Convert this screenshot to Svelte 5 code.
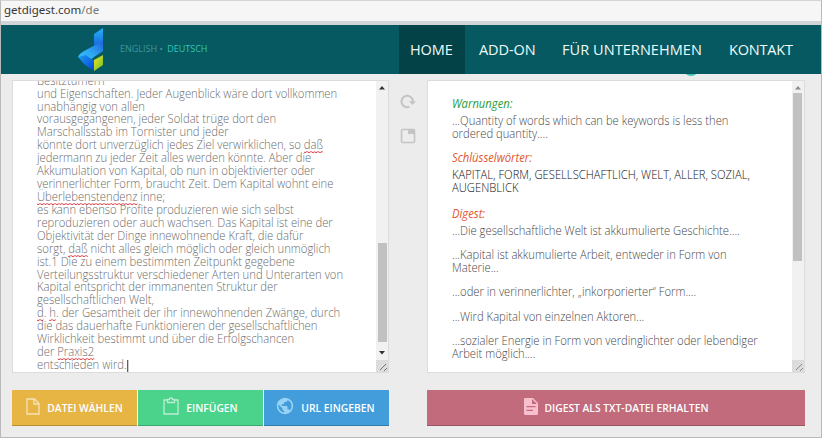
<script>
  const nav = ['HOME', 'ADD-ON', 'FÜR UNTERNEHMEN', 'KONTAKT'];
  // Words wrapped in underscores are flagged by the spell checker.
  const lines = [
    'Besitztümern',
    'und Eigenschaften. Jeder Augenblick wäre dort vollkommen',
    'unabhängig von allen',
    'vorausgegangenen, jeder Soldat trüge dort den',
    'Marschallsstab im Tornister und jeder',
    'könnte dort unverzüglich jedes Ziel verwirklichen, so _daß_',
    'jedermann zu jeder Zeit alles werden könnte. Aber die',
    'Akkumulation von Kapital, ob nun in objektivierter oder',
    'verinnerlichter Form, braucht Zeit. Dem Kapital wohnt eine',
    '_Überlebenstendenz_ inne;',
    'es kann ebenso Profite produzieren wie sich selbst',
    'reproduzieren oder auch wachsen. Das Kapital ist eine der',
    'Objektivität der Dinge innewohnende Kraft, die dafür',
    'sorgt, _daß_ nicht alles gleich möglich oder gleich unmöglich',
    'ist.1 Die zu einem bestimmten Zeitpunkt gegebene',
    'Verteilungsstruktur verschiedener Arten und Unterarten von',
    'Kapital entspricht der immanenten Struktur der',
    'gesellschaftlichen Welt,',
    '_d_. _h_. der Gesamtheit der ihr innewohnenden Zwänge, durch',
    'die das dauerhafte Funktionieren der gesellschaftlichen',
    'Wirklichkeit bestimmt und über die Erfolgschancen',
    'der _Praxis2_',
    'entschieden wird.'
  ].map((l) => l.split('_'));
  const digest = [
    ['...Die gesellschaftliche Welt ist akkumulierte Geschichte....'],
    ['...Kapital ist akkumulierte Arbeit, entweder in Form von', 'Materie...'],
    ['...oder in verinnerlichter, „inkorporierter“ Form....'],
    ['...Wird Kapital von einzelnen Aktoren...'],
    ['...sozialer Energie in Form von verdinglichter oder lebendiger', 'Arbeit möglich....']
  ];
</script>

<div class="window">
  <div class="address">getdigest.com<span>/de</span></div>
  <header>
    <svg class="logo" width="28" height="46" viewBox="0 0 28 46">
      <defs>
        <linearGradient id="wing" x1="1" y1="0" x2="0" y2="1">
          <stop offset="0" stop-color="#1d62dc" /><stop offset=".5" stop-color="#2fa6f2" /><stop offset="1" stop-color="#35c8fa" />
        </linearGradient>
        <linearGradient id="base" x1="0" y1="0" x2="1" y2="1">
          <stop offset="0" stop-color="#1a9df0" /><stop offset="1" stop-color="#0645d8" />
        </linearGradient>
        <linearGradient id="tip" x1="0" y1="0" x2="0" y2="1">
          <stop offset="0" stop-color="#27b3f7" /><stop offset="1" stop-color="#1763dd" />
        </linearGradient>
        <linearGradient id="leaf" x1="0" y1="0" x2="1" y2="1">
          <stop offset="0" stop-color="#efe51d" /><stop offset="1" stop-color="#72bd30" />
        </linearGradient>
      </defs>
      <path d="M17 8 26 2V17L17 21Z" fill="url(#tip)" />
      <path d="M1 31Q2 28 7 25L26 15V25L17 31 10 37Z" fill="url(#wing)" />
      <path d="M1 31 9 29Q13 33 17 34V45Q12 42 7 38Z" fill="url(#base)" />
      <path d="M17 34 26 29V39L17 45Z" fill="url(#leaf)" />
    </svg>
    <div class="languages">ENGLISH <i>•</i> <b>DEUTSCH</b></div>
    <nav>
      {#each nav as item, i}<div class={['item', `item-${i}`, i === 0 && 'active']}><span>{item}</span></div>{/each}
    </nav>
    <div class="arc"></div>
  </header>

  <main>
    <section class="source">
      <div class="panel">
        <div class="text">
          {#each lines as parts, n}
            <div>{#each parts as part, i}{#if i % 2}<u>{part}</u>{:else}{part}{/if}{/each}{#if n === lines.length - 1}<span class="caret"></span>{/if}</div>
          {/each}
        </div>
        <div class="scroll">
          <svg width="12" height="13" viewBox="0 0 12 13"><path d="M3 8.500 6 5 9 8.500Z" fill="#333" /></svg>
          <div class="thumb"></div>
          <svg width="12" height="18" viewBox="0 0 12 18"><path d="M3 9h6L6 12.500Z" fill="#333" /></svg>
          <svg class="grip" width="12" height="12" viewBox="0 0 12 12"><path d="M4 10 10 4M8 11 11 8" stroke="#777" fill="none" /></svg>
        </div>
      </div>
      <div class="buttons">
        <button class="file">
          <svg width="14" height="17" viewBox="0 0 14 17"><path d="M1 1H8.5L13 5.5V16H1ZM8 1V6H13" /></svg><span>DATEI WÄHLEN</span>
        </button>
        <button class="paste">
          <svg width="16" height="18" viewBox="0 0 16 18"><path d="M5 3H1V17H15V3H11M4.5 2.5H6.2Q6.5 1 8 1T9.800 2.500H11.500V5.500H4.500Z" /></svg><span>EINFÜGEN</span>
        </button>
        <button class="url">
          <svg width="18" height="18" viewBox="1 1 22 22"><path class="solid" d="M12 2C6.480 2 2 6.480 2 12s4.480 10 10 10 10-4.480 10-10S17.520 2 12 2zm-1 17.930c-3.950-.490-7-3.850-7-7.930 0-.620.080-1.210.210-1.790L9 15v1c0 1.100.900 2 2 2v1.930zm6.900-2.540c-.260-.810-1-1.390-1.900-1.390h-1v-3c0-.550-.450-1-1-1H8v-2h2c.550 0 1-.450 1-1V7h2c1.100 0 2-.900 2-2v-.410c2.930 1.190 5 4.060 5 7.410 0 2.080-.800 3.970-2.100 5.390z" /></svg><span>URL EINGEBEN</span>
        </button>
      </div>
    </section>

    <aside>
      <svg width="16" height="16" viewBox="0 0 16 16"><path d="M9.500 12.700A5.700 5.700 0 1 1 12.900 7.500" fill="none" stroke="#c4c4c4" stroke-width="2" /><path d="M9 7.200H15.900L12.500 11Z" fill="#c4c4c4" /></svg>
      <svg width="16" height="16" viewBox="0 0 16 16"><rect x="1.500" y="1.500" width="13" height="13" rx="1" fill="none" stroke="#c4c4c4" stroke-width="1.600" /><path d="M8 1H15V6H8Z" fill="#c4c4c4" /></svg>
    </aside>

    <section class="result">
      <div class="panel">
        <div class="report">
          <h3 class="warn">Warnungen:</h3>
          <p>...Quantity of words which can be keywords is less then<br />ordered quantity....</p>
          <h3>Schlüsselwörter:</h3>
          <p class="keys">KAPITAL, FORM, GESELLSCHAFTLICH, WELT, ALLER, SOZIAL,<br />AUGENBLICK</p>
          <h3>Digest:</h3>
          {#each digest as item}<p class="quote">{#each item as line}<span>{line}</span>{/each}</p>{/each}
        </div>
        <div class="scroll">
          <svg width="12" height="12" viewBox="0 0 12 12"><path d="M3 8.500 6 5 9 8.500Z" fill="#8b8b8b" /></svg>
          <div class="thumb"></div>
          <svg class="grip" width="12" height="12" viewBox="0 0 12 12"><path d="M4 10 10 4M8 11 11 8" stroke="#888" fill="none" /></svg>
        </div>
      </div>
      <div class="buttons">
        <button class="download">
          <svg width="14" height="17" viewBox="0 0 14 17"><path class="solid" fill-rule="evenodd" d="M1 0H9L14 5V15.500Q14 17 12.500 17H1.500Q0 17 0 15.500V1Q0 0 1 0ZM8 1V6H13ZM2.500 8V9.300H11.500V8ZM2.500 11.800V13.100H9V11.800Z" /></svg><span>DIGEST ALS TXT-DATEI ERHALTEN</span>
        </button>
      </div>
    </section>
  </main>
</div>

<style>
  .window {
    box-sizing: border-box; width: 822px; height: 438px; overflow: hidden;
    display: flex; flex-direction: column; background: #ececec;
    border: 1px solid #b9b9b9; border-top-color: #d4d4d4;
    font-family: 'Open Sans', 'Noto Sans', sans-serif;
  }
  .address {
    box-sizing: border-box; height: 24px; flex: none; padding-left: 3px;
    background: #f6f6f6; border-bottom: 4px solid #d2d5d8;
    font: 11.500px/17px 'Noto Sans', sans-serif; color: #353535;
  }
  .address span { color: #777; }
  header { position: relative; display: flex; height: 49px; flex: none; background: #065960; }
  .logo { margin: 1px 0 0 76px; flex: none; }
  .languages { margin-left: 15px; width: 279px; flex: none; font-size: 9px; line-height: 48px; color: #3f969a; white-space: pre; }
  .languages i { font-style: normal; font-size: 9px; }
  .languages b { font-weight: 400; color: #30c7b5; margin-left: 2px; }
  nav { display: flex; font-size: 14.500px; line-height: 49px; color: #eefafa; }
  .item { box-sizing: border-box; padding-left: 11px; white-space: nowrap; }
  .item-0 { width: 66px; letter-spacing: -.1px; }
  .item-1 { width: 83px; padding-left: 14px; letter-spacing: -.1px; }
  .item-2 { width: 167px; padding-left: 14px; letter-spacing: .07px; }
  .item-3 { width: 92px; padding-left: 14px; letter-spacing: -.2px; }
  .active { background: #034247; }
  .arc { position: absolute; left: 682px; top: 49px; width: 16px; height: 2px; overflow: hidden; }
  .arc::after { content: ''; position: absolute; box-sizing: border-box; left: 0; bottom: 0; width: 16px; height: 16px; border: 2px solid #45c3b6; border-radius: 50%; }
  main { display: flex; padding: 6px 0 0 11px; }
  section { display: flex; flex-direction: column; gap: 17px; }
  .source { width: 377px; }
  .result { width: 378px; }
  aside { width: 38px; display: flex; flex-direction: column; align-items: center; gap: 18px; padding-top: 14px; }
  .panel { box-sizing: border-box; height: 293px; display: flex; background: #fff; border: 1px solid #dcdcdc; overflow: hidden; }
  .text { flex: 1; margin: -6.300px 0 0 24px; transform: scaleX(.9405); transform-origin: 0 0; font-size: 12px; font-weight: 300; line-height: 12.930px; color: #6c6c6c; white-space: nowrap; }
  .text div { height: 12.930px; }
  /* Fine zigzag made of two offset rows of dots */
  .text u {
    text-decoration: none;
    background:
      repeating-linear-gradient(90deg, #e0555c 0 2px, #f6c8ca 2px 4px) 0 100% / 100% 1px no-repeat,
      repeating-linear-gradient(90deg, #fbe3e4 0 2px, #e98a8f 2px 4px) 0 calc(100% - 1px) / 100% 1px no-repeat;
  }
  .caret { display: inline-block; width: 1px; height: 14px; background: #222; vertical-align: -5px; margin-left: 1px; }
  .scroll { width: 12px; display: flex; flex-direction: column; background: #f1f1f1; flex: none; }
  .scroll svg { flex: none; }
  .source .thumb { margin: 149px 1px 0 2px; height: 99px; background: #c1c1c1; }
  .result .thumb { margin: 0 2px 0 1px; height: 168px; background: #c1c1c1; }
  .scroll .grip { margin-top: auto; background: #dcdcdc; }
  .report { flex: 1; margin: 16px 0 0 24px; transform: scaleX(.937); transform-origin: 0 0; font-size: 12px; line-height: 13px; font-weight: 300; color: #484848; white-space: nowrap; }
  h3 { margin: 0; font-size: 12px; font-weight: 400; font-style: italic; line-height: 13px; color: #e2562c; }
  .warn { color: #2c9a35; }
  p { margin: 4px 0 11px; }
  .keys { color: #111; margin-bottom: 13px; }
  .quote { margin: 0 0 11.200px; }
  h3 + .quote { margin-top: 4px; }
  .quote span { display: block; }
  .buttons { display: flex; gap: 1px; height: 36px; }
  .source .buttons { background: #f8f8f8; }
  button {
    flex: 1 1 0; min-width: 0; box-sizing: border-box; padding: 0; border: 0; box-shadow: inset 0 -1px 0 #0003;
    display: flex; align-items: center; justify-content: center; gap: 7px;
    font: 600 10.300px/14px 'Open Sans', sans-serif; color: #fff; white-space: nowrap;
  }
  button svg { fill: none; stroke: currentColor; stroke-width: 1.300; flex: none; position: relative; top: -2px; opacity: .62; }
  button .solid { fill: currentColor; stroke: none; }
  .file { background: #e7b544; }
  .paste { background: #4bd38b; }
  .url { background: #429dda; }
  .url span { margin-right: 2px; }
  .url svg { color: #b5e4ff; opacity: .75; }
  .download { background: #c16b7c; }
  .download svg { color: #ffc9d8; opacity: .9; }
</style>
